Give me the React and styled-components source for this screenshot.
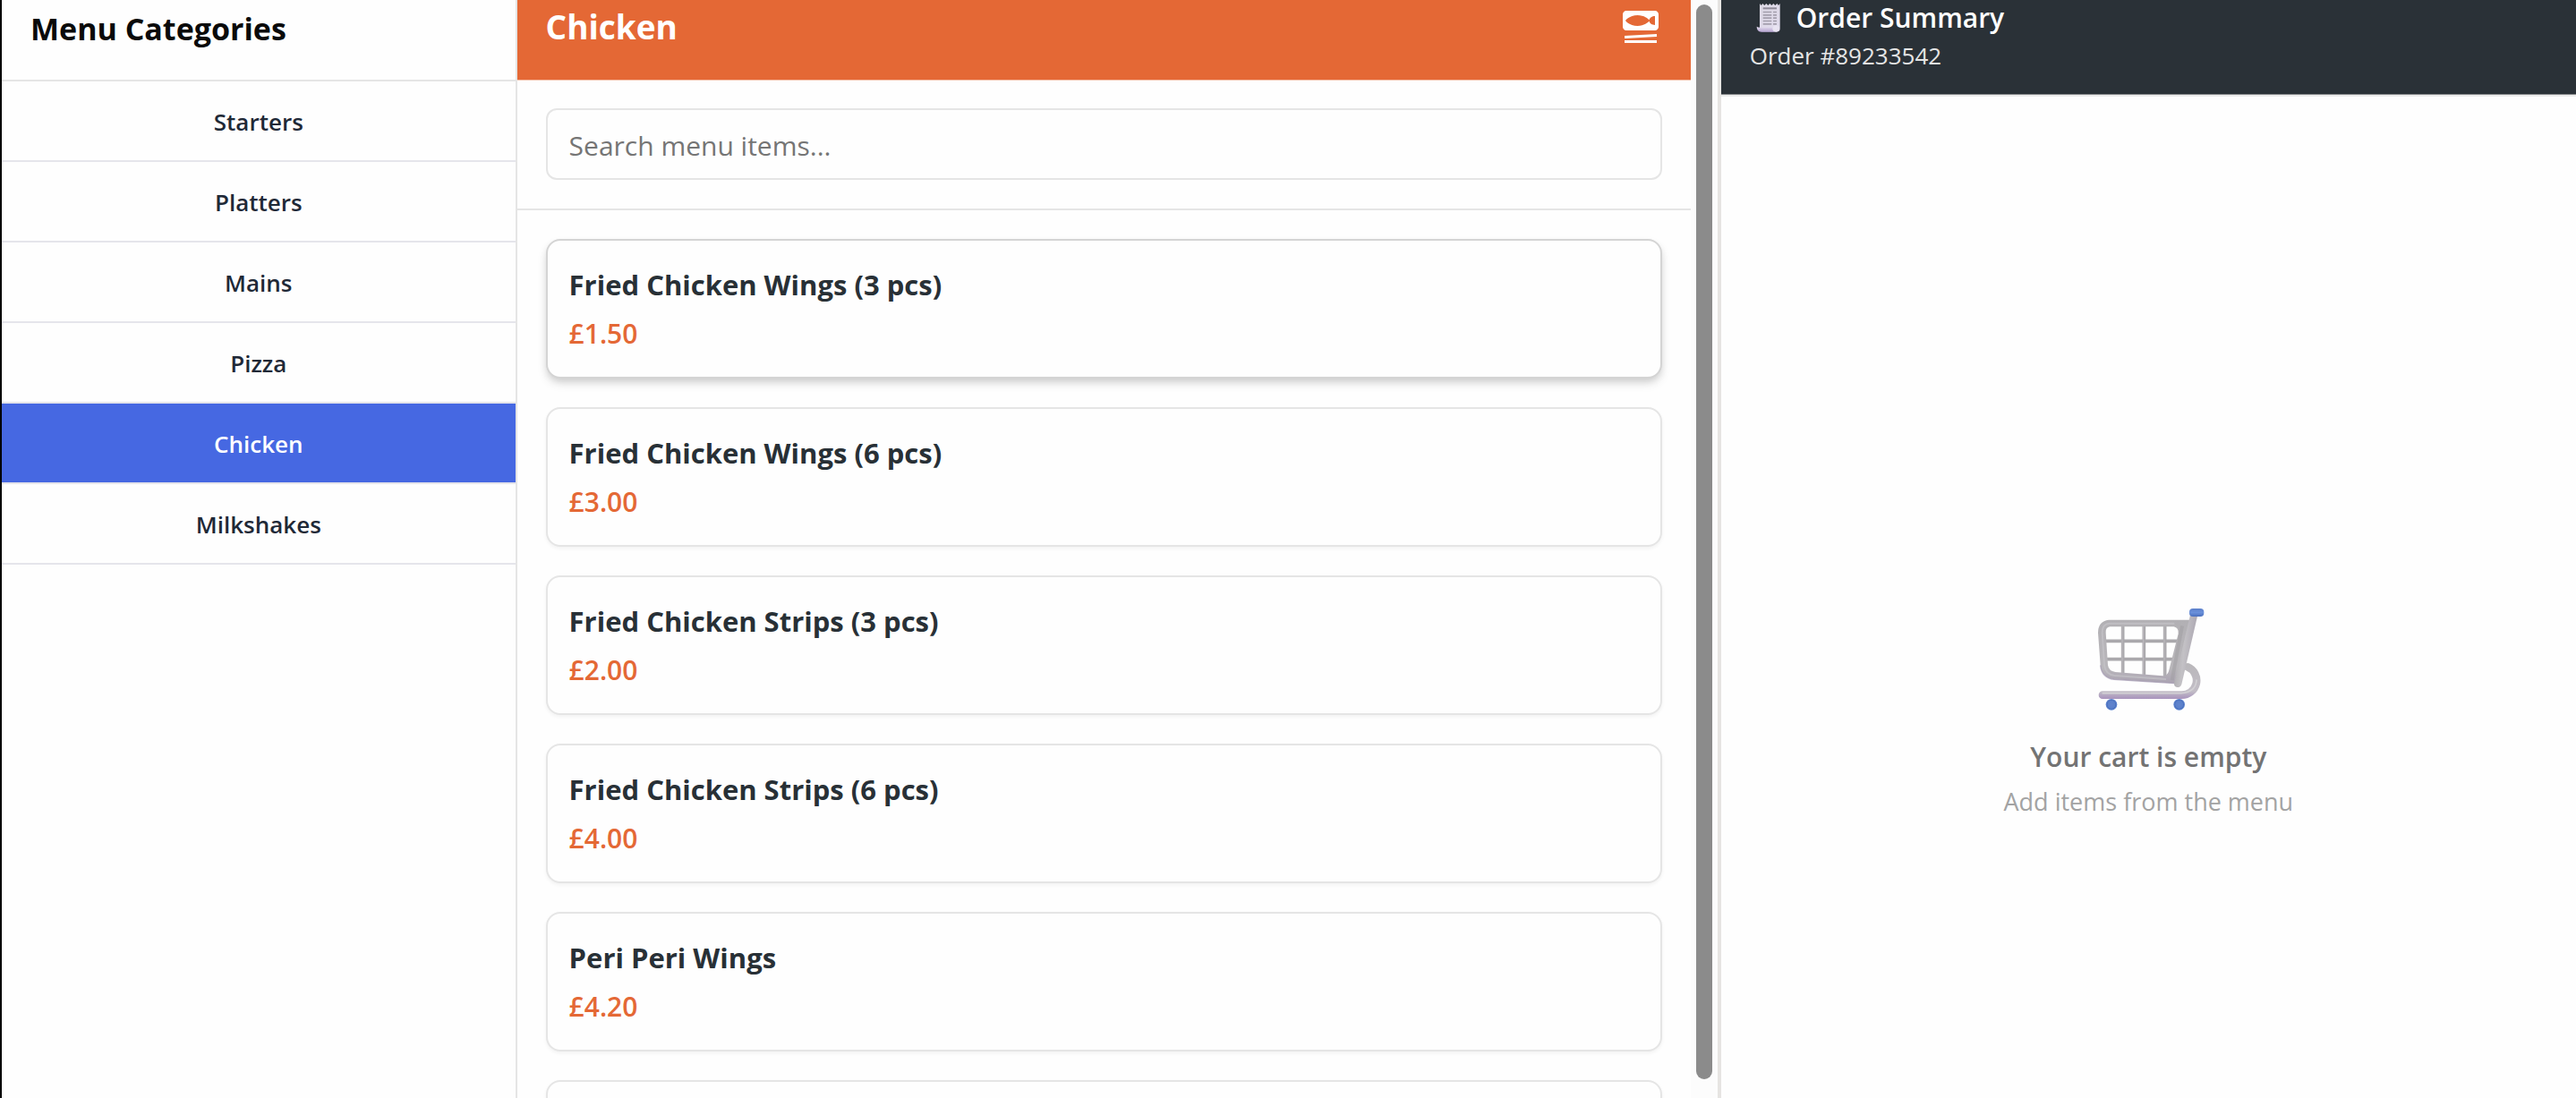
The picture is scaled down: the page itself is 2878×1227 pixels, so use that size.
import React, { useState } from "react";
import styled, { createGlobalStyle } from "styled-components";
import { MdSetMeal } from "react-icons/md";

const GlobalStyle = createGlobalStyle`
  *, *::before, *::after { box-sizing: border-box; }
  body {
    margin: 0;
    background: #fefefe;
    font-family: "Open Sans", "Noto Sans", sans-serif;
  }
  h1, h2, h3, p, ul { margin: 0; padding: 0; }
  button, input { font-family: inherit; }
`;

const Page = styled.div`
  display: grid;
  grid-template-columns: calc(20% + 2px) 1fr 33.333%;
  height: 100vh;
  overflow: hidden;
`;

const Sidebar = styled.nav`
  border-left: 2px solid #000;
  border-right: 2px solid #e5e5e5;
`;

const SidebarTitle = styled.h2`
  padding: 8px 32px 33px;
  border-bottom: 2px solid #e5e5e5;
  color: #0a0a0a;
  font-size: 34px;
  font-weight: 700;
  line-height: 48px;
`;

const CategoryList = styled.ul`
  list-style: none;
`;

const CategoryButton = styled.button`
  display: block;
  width: 100%;
  height: 90px;
  padding: 2px 32px 0;
  border: 0;
  border-bottom: 2px solid #e5e5eb;
  background: ${(p) => (p.$active ? "#4668e2" : "transparent")};
  background-clip: padding-box;
  color: ${(p) => (p.$active ? "#ffffff" : "#1f2937")};
  font-size: 26px;
  font-weight: 600;
  text-align: center;
  cursor: pointer;
`;

const MenuColumn = styled.main`
  display: flex;
  min-width: 0;
  min-height: 0;
`;

const MenuContent = styled.div`
  flex: 1;
  min-width: 0;
  overflow: hidden;
`;

const MenuHeader = styled.header`
  display: flex;
  align-items: center;
  justify-content: space-between;
  padding: 4px 32px 33px;
  background: #e46835;
  box-shadow: 0 1px 0 #f4bfa8;
  color: #fff;

  h1 {
    font-size: 37px;
    font-weight: 700;
    line-height: 52px;
  }
`;

const SearchBar = styled.div`
  padding: 32px;
  border-bottom: 2px solid #e5e5e5;
`;

const SearchInput = styled.input`
  display: block;
  width: 100%;
  height: 80px;
  padding: 2px 24px 0;
  border: 2px solid #e5e5e5;
  border-radius: 12px;
  background: transparent;
  font-size: 30px;
  outline: none;

  &::placeholder {
    color: #757575;
    opacity: 1;
  }
`;

const ItemList = styled.div`
  display: flex;
  flex-direction: column;
  gap: 32px;
  padding: 32px;
`;

const ItemCard = styled.button`
  display: flex;
  flex-direction: column;
  gap: 12px;
  padding: 26px 24px 28px;
  border: 2px solid ${(p) => (p.$raised ? "#d4d4d4" : "#e5e5e5")};
  border-radius: 16px;
  background: #fefefe;
  box-shadow: ${(p) =>
    p.$raised
      ? "0 6px 12px -1px rgba(0, 0, 0, 0.12), 0 4px 8px -2px rgba(0, 0, 0, 0.12)"
      : "0 2px 4px rgba(0, 0, 0, 0.05)"};
  text-align: left;
  cursor: pointer;
`;

const ItemName = styled.span`
  color: #283036;
  font-size: 31px;
  font-weight: 700;
  line-height: 46px;
`;

const ItemPrice = styled.span`
  color: #e46835;
  font-size: 30px;
  font-weight: 600;
  line-height: 40px;
`;

const ScrollTrack = styled.div`
  display: flex;
  width: 30px;
  padding: 5px 6px 21px;
  background: #fcfcfc;
`;

const ScrollThumb = styled.div`
  flex: 1;
  border-radius: 9px;
  background: #8b8b8b;
`;

const OrderPanel = styled.aside`
  display: flex;
  flex-direction: column;
  border-left: 4px solid #e6e4e2;
`;

const OrderHeader = styled.header`
  display: flex;
  flex-direction: column;
  gap: 4px;
  padding: 0 32px 25px;
  border-bottom: 1px solid #86898b;
  background: #2a3137;
  box-shadow: 0 2px 0 #ececec;
`;

const OrderTitle = styled.h2`
  display: flex;
  align-items: flex-start;
  gap: 8px;
  color: #fff;
  font-size: 30px;
  font-weight: 600;
  line-height: 40px;
`;

const OrderNumber = styled.p`
  color: #e5e5e5;
  font-size: 26px;
  line-height: 36px;
`;

const EmptyCart = styled.div`
  display: flex;
  flex: 1;
  flex-direction: column;
  align-items: center;
  justify-content: center;
  padding-top: 240px;
`;

const EmptyTitle = styled.h3`
  margin-top: 16px;
  color: #737373;
  font-size: 30px;
  font-weight: 600;
  line-height: 40px;
`;

const EmptyHint = styled.p`
  margin-top: 12px;
  color: #a3a3a3;
  font-size: 27px;
  line-height: 36px;
`;

function ReceiptIcon() {
  return (
    <svg width="44" height="36" viewBox="30 0 132 108" aria-hidden="true">
      <defs>
        <linearGradient id="paper" x1="0" y1="0" x2="1" y2="1">
          <stop offset="0" stopColor="#dcd8e4" />
          <stop offset="1" stopColor="#e2dcee" />
        </linearGradient>
        <linearGradient id="roll" x1="0" y1="0" x2="0" y2="1">
          <stop offset="0" stopColor="#e4deee" />
          <stop offset="1" stopColor="#b5a3d0" />
        </linearGradient>
      </defs>
      <path
        d="M63 12l5 6 5-6 6 6 6-6 6 6 6-6 6 6 6-6 6 6 6-6 5 6 5-6v84q0 10-10 10H72q-9-2-9-14z"
        fill="url(#paper)"
      />
      <path d="M53 89q6 4 14 3h39q-2 14 12 15H68q-15-1-15-18z" fill="url(#roll)" />
      <circle cx="118" cy="96" r="11" fill="#e9e4f2" />
      <g fill="#a49fad">
        <path d="M74 25h46v6H74z" fill="#8f8a98" />
        <path d="M74 38h29v5H74zM108 38h12v5h-12zM74 48h29v5H74zM108 48h12v5h-12zM74 58h29v5H74zM108 58h12v5h-12zM74 68h29v5H74zM108 68h12v5h-12zM74 78h29v5H74zM108 78h12v5h-12z" />
      </g>
    </svg>
  );
}

function CartIcon() {
  return (
    <svg width="160" height="150" viewBox="0 0 480 450" fill="none" aria-hidden="true">
      <defs>
        <linearGradient id="basket" x1="0" y1="0" x2="0" y2="1">
          <stop offset="0" stopColor="#b2b0b4" />
          <stop offset="0.75" stopColor="#b9b7bb" />
          <stop offset="1" stopColor="#aaa2b2" />
        </linearGradient>
        <linearGradient id="rail" gradientUnits="userSpaceOnUse" x1="0" y1="240" x2="0" y2="362">
          <stop offset="0" stopColor="#b9b7ba" />
          <stop offset="0.8" stopColor="#c2bdc6" />
          <stop offset="1" stopColor="#a994bd" />
        </linearGradient>
        <linearGradient id="post" x1="0" y1="0" x2="1" y2="0.25">
          <stop offset="0" stopColor="#a5a3a7" />
          <stop offset="0.5" stopColor="#c3c1c5" />
          <stop offset="1" stopColor="#aaa5b0" />
        </linearGradient>
        <radialGradient id="wheel">
          <stop offset="0" stopColor="#6384cc" />
          <stop offset="0.65" stopColor="#5a80cb" />
          <stop offset="0.75" stopColor="#4b70bd" />
          <stop offset="1" stopColor="#638ad5" />
        </radialGradient>
        <linearGradient id="grip" x1="0" y1="0" x2="0" y2="1">
          <stop offset="0" stopColor="#5b7fca" />
          <stop offset="0.5" stopColor="#6a90da" />
          <stop offset="1" stopColor="#4b6fbd" />
        </linearGradient>
      </defs>
      <path
        d="M87 350H350A50 49 0 0 0 372 256"
        stroke="url(#rail)"
        strokeWidth="26"
        strokeLinecap="round"
      />
      <path d="M88 344H350Q400 340 402 300" stroke="#d2d0d4" strokeWidth="5" strokeLinecap="round" />
      <path
        d="M155 118V278M226 118V284M296 118V290M98 169H340M102 230H328"
        stroke="#aaa8ac"
        strokeWidth="11"
      />
      <path d="M153 118V278M224 118V284M294 118V290" stroke="#bdbbbf" strokeWidth="3" />
      <path
        fillRule="evenodd"
        fill="url(#basket)"
        d="M108 98H382L345 312L126 298Q84 292 80 250L72 142Q72 102 108 98ZM112 121Q97 124 98 140L105 250Q108 270 130 273L290 286Q304 286 309 270L341 145Q343 124 326 121Z"
      />
      <path
        d="M328 110H110Q86 112 86 140L93 250Q97 281 128 285L300 297"
        stroke="#c5c3c7"
        strokeWidth="6"
        opacity="0.7"
      />
      <path d="M80 250Q84 292 126 298L330 311" stroke="#a399b1" strokeWidth="4" opacity="0.7" />
      <path d="M354 118L320 300" stroke="#a09ea2" strokeWidth="12" opacity="0.55" />
      <path
        d="M381 82H406L352 314Q348 325 337 324Q326 322 327 310Z"
        fill="url(#post)"
      />
      <rect x="378" y="60" width="49" height="27" rx="12" fill="url(#grip)" />
      <circle cx="117" cy="382" r="19" fill="url(#wheel)" />
      <circle cx="344" cy="382" r="19" fill="url(#wheel)" />
    </svg>
  );
}

const categories = ["Starters", "Platters", "Mains", "Pizza", "Chicken", "Milkshakes"];

const items = [
  { name: "Fried Chicken Wings (3 pcs)", price: "£1.50", raised: true },
  { name: "Fried Chicken Wings (6 pcs)", price: "£3.00" },
  { name: "Fried Chicken Strips (3 pcs)", price: "£2.00" },
  { name: "Fried Chicken Strips (6 pcs)", price: "£4.00" },
  { name: "Peri Peri Wings", price: "£4.20" },
  { name: "", price: "" },
];

export default function App() {
  const [active, setActive] = useState("Chicken");
  const [query, setQuery] = useState("");
  const shown = items.filter((item) => item.name.toLowerCase().includes(query.toLowerCase()));

  return (
    <>
      <GlobalStyle />
      <Page>
        <Sidebar aria-label="Menu categories">
          <SidebarTitle>Menu Categories</SidebarTitle>
          <CategoryList>
            {categories.map((name) => (
              <li key={name}>
                <CategoryButton
                  type="button"
                  $active={name === active}
                  onClick={() => setActive(name)}
                >
                  {name}
                </CategoryButton>
              </li>
            ))}
          </CategoryList>
        </Sidebar>

        <MenuColumn>
          <MenuContent>
            <MenuHeader>
              <h1>{active}</h1>
              <MdSetMeal size={48} aria-hidden="true" />
            </MenuHeader>
            <SearchBar>
              <SearchInput
                type="text"
                aria-label="Search menu items"
                placeholder="Search menu items..."
                value={query}
                onChange={(e) => setQuery(e.target.value)}
              />
            </SearchBar>
            <ItemList>
              {shown.map((item) => (
                <ItemCard key={item.name} type="button" $raised={item.raised}>
                  <ItemName>{item.name}</ItemName>
                  <ItemPrice>{item.price}</ItemPrice>
                </ItemCard>
              ))}
            </ItemList>
          </MenuContent>
          <ScrollTrack>
            <ScrollThumb />
          </ScrollTrack>
        </MenuColumn>

        <OrderPanel>
          <OrderHeader>
            <OrderTitle>
              <ReceiptIcon />
              Order Summary
            </OrderTitle>
            <OrderNumber>Order #89233542</OrderNumber>
          </OrderHeader>
          <EmptyCart>
            <CartIcon />
            <EmptyTitle>Your cart is empty</EmptyTitle>
            <EmptyHint>Add items from the menu</EmptyHint>
          </EmptyCart>
        </OrderPanel>
      </Page>
    </>
  );
}
